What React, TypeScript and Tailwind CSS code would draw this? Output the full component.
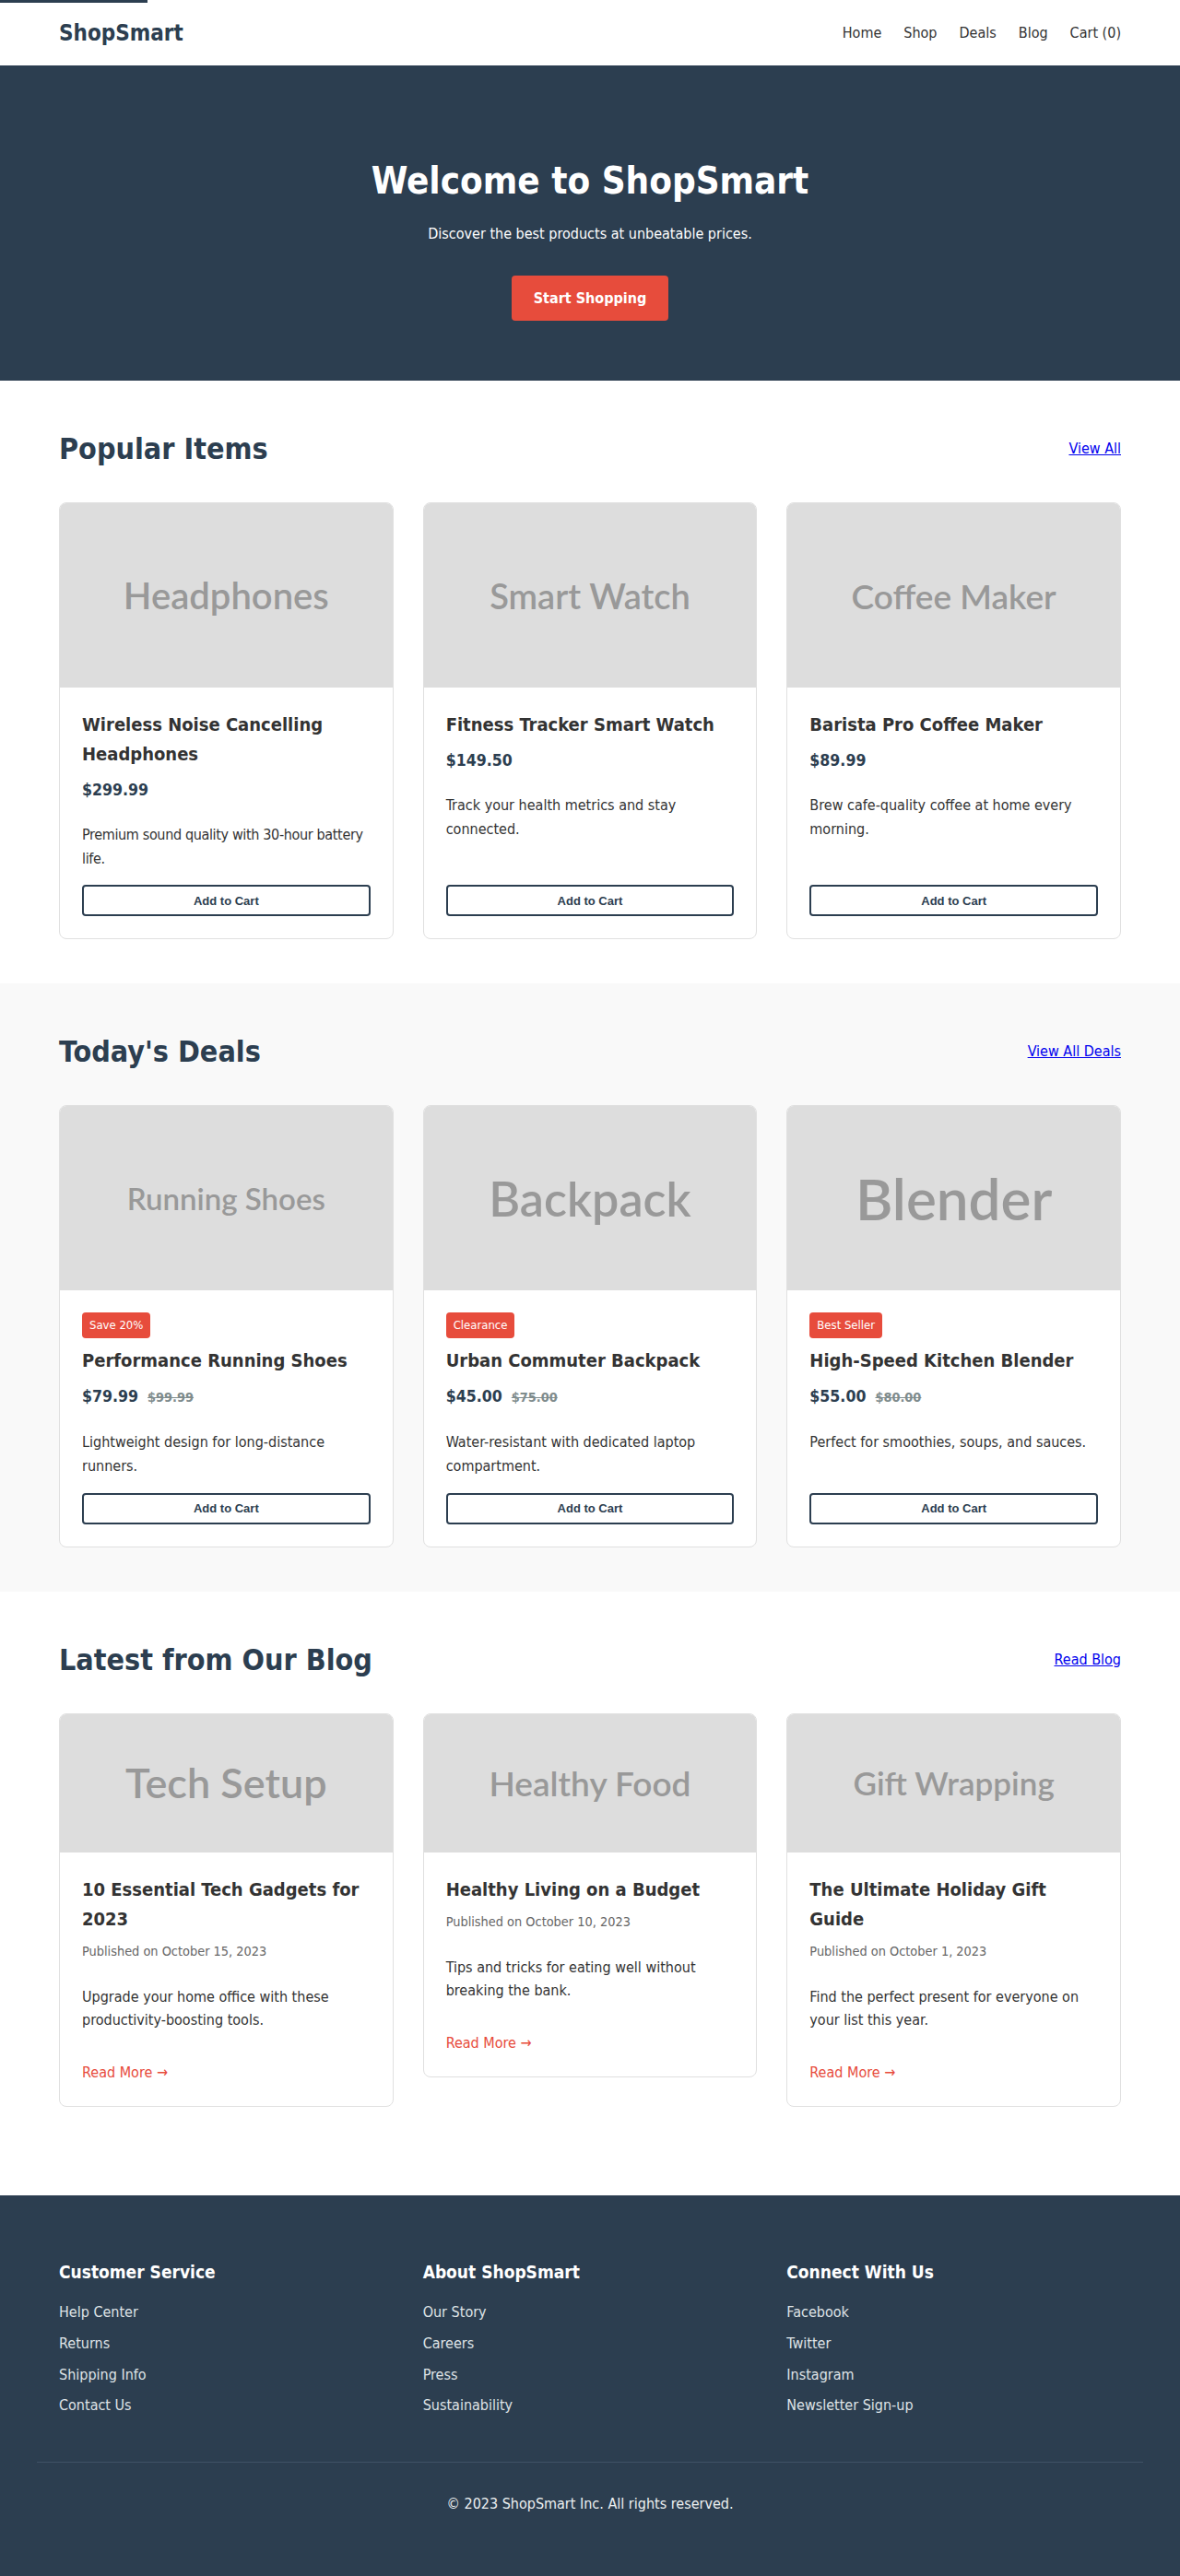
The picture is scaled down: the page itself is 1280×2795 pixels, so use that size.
import React from 'react';

const products = [
  {
    img: 'Headphones',
    imgSize: 'text-[40px]',
    title: 'Wireless Noise Cancelling Headphones',
    price: '$299.99',
    desc: 'Premium sound quality with 30-hour battery life.',
    descClass: 'tracking-[-0.35px]',
  },
  {
    img: 'Smart Watch',
    imgSize: 'text-[38px]',
    title: 'Fitness Tracker Smart Watch',
    price: '$149.50',
    desc: 'Track your health metrics and stay connected.',
  },
  {
    img: 'Coffee Maker',
    imgSize: 'text-[37px]',
    title: 'Barista Pro Coffee Maker',
    price: '$89.99',
    desc: 'Brew cafe-quality coffee at home every morning.',
  },
];

const deals = [
  {
    img: 'Running Shoes',
    imgSize: 'text-[33px]',
    badge: 'Save 20%',
    title: 'Performance Running Shoes',
    price: '$79.99',
    old: '$99.99',
    desc: 'Lightweight design for long-distance runners.',
  },
  {
    img: 'Backpack',
    imgSize: 'text-[52px]',
    badge: 'Clearance',
    title: 'Urban Commuter Backpack',
    price: '$45.00',
    old: '$75.00',
    desc: 'Water-resistant with dedicated laptop compartment.',
  },
  {
    img: 'Blender',
    imgSize: 'text-[62px]',
    badge: 'Best Seller',
    title: 'High-Speed Kitchen Blender',
    price: '$55.00',
    old: '$80.00',
    desc: 'Perfect for smoothies, soups, and sauces.',
  },
];

const posts = [
  {
    img: 'Tech Setup',
    imgSize: 'text-[45px]',
    title: '10 Essential Tech Gadgets for 2023',
    date: 'Published on October 15, 2023',
    desc: 'Upgrade your home office with these productivity-boosting tools.',
  },
  {
    img: 'Healthy Food',
    imgSize: 'text-[37px]',
    title: 'Healthy Living on a Budget',
    date: 'Published on October 10, 2023',
    desc: 'Tips and tricks for eating well without breaking the bank.',
  },
  {
    img: 'Gift Wrapping',
    imgSize: 'text-[35px]',
    title: 'The Ultimate Holiday Gift Guide',
    date: 'Published on October 1, 2023',
    desc: 'Find the perfect present for everyone on your list this year.',
  },
];

const footerCols = [
  { title: 'Customer Service', links: ['Help Center', 'Returns', 'Shipping Info', 'Contact Us'] },
  { title: 'About ShopSmart', links: ['Our Story', 'Careers', 'Press', 'Sustainability'] },
  { title: 'Connect With Us', links: ['Facebook', 'Twitter', 'Instagram', 'Newsletter Sign-up'] },
];

function Placeholder({ label, size, height }: { label: string; size: string; height: string }) {
  return (
    <div
      className={`flex ${height} items-center justify-center whitespace-nowrap bg-[#dddddd] font-['Lato',sans-serif] font-semibold leading-none text-[#999999] ${size}`}
    >
      {label}
    </div>
  );
}

function SectionHeader({ title, link }: { title: string; link: string }) {
  return (
    <div className="mb-8 flex items-center justify-between">
      <h2 className="text-[32px] font-bold leading-[52px] text-[#2c3e50]">{title}</h2>
      <a href="#" className="text-base text-[#0000ee] underline">
        {link}
      </a>
    </div>
  );
}

type Item = {
  img: string;
  imgSize: string;
  title: string;
  price: string;
  desc: string;
  descClass?: string;
  badge?: string;
  old?: string;
};

function ProductCard({ item }: { item: Item }) {
  return (
    <div className="flex flex-col overflow-hidden rounded-lg border border-[#e0e0e0] bg-white">
      <Placeholder label={item.img} size={item.imgSize} height="h-[200px]" />
      <div className="flex flex-1 flex-col p-6">
        {item.badge && (
          <span className="mb-2 self-start rounded bg-[#e74c3c] px-2 py-1 text-[13px] leading-5 text-white">
            {item.badge}
          </span>
        )}
        <h3 className="mb-2 text-[20px] font-bold leading-8 text-[#333333]">{item.title}</h3>
        <div className="mb-[21px] flex items-baseline leading-[30px]">
          <span className="text-[17.6px] font-bold text-[#2c3e50]">{item.price}</span>
          {item.old && (
            <span className="ml-2.5 text-[14.4px] font-bold text-[#7f8c8d] line-through">{item.old}</span>
          )}
        </div>
        <p className={`mb-4 text-base leading-[25.6px] text-[#333333] ${item.descClass ?? ''}`}>{item.desc}</p>
        <button className="mt-auto h-[34px] w-full rounded border-2 border-[#2c3e50] bg-white font-['Liberation_Sans',Arial,sans-serif] text-[13px] font-bold text-[#2c3e50]">
          Add to Cart
        </button>
      </div>
    </div>
  );
}

export default function App() {
  return (
    <div className="relative min-h-screen bg-white font-['DejaVu_Sans_Condensed','DejaVu_Sans',sans-serif] text-[#333333]">
      {/* loading bar */}
      <div className="absolute left-0 top-0 h-[3px] w-[160px] bg-[#2c3e50]" />

      {/* Header */}
      <header className="bg-white shadow-[0_1px_3px_rgba(0,0,0,0.12)]">
        <div className="mx-auto flex h-[71px] max-w-[1200px] items-center justify-between px-6">
          <a href="#" className="text-[24px] font-bold text-[#2c3e50]">
            ShopSmart
          </a>
          <nav className="flex gap-6 text-base text-[#333333]">
            <a href="#">Home</a>
            <a href="#">Shop</a>
            <a href="#">Deals</a>
            <a href="#">Blog</a>
            <a href="#">Cart (0)</a>
          </nav>
        </div>
      </header>

      {/* Hero */}
      <section className="bg-[#2c3e50] px-6 pb-[65px] pt-[88px] text-center text-white">
        <h1 className="mb-2 text-[40px] font-bold leading-[74px]">Welcome to ShopSmart</h1>
        <p className="mb-8 text-base leading-[25.6px]">Discover the best products at unbeatable prices.</p>
        <a
          href="#"
          className="inline-block rounded bg-[#e74c3c] px-6 py-3 text-base font-bold leading-[25.6px] text-white"
        >
          Start Shopping
        </a>
      </section>

      {/* Popular */}
      <section className="py-12">
        <div className="mx-auto max-w-[1200px] px-6">
          <SectionHeader title="Popular Items" link="View All" />
          <div className="grid grid-cols-3 gap-8">
            {products.map((p) => (
              <ProductCard key={p.title} item={p} />
            ))}
          </div>
        </div>
      </section>

      {/* Deals */}
      <section className="bg-[#f9f9f9] py-12">
        <div className="mx-auto max-w-[1200px] px-6">
          <SectionHeader title="Today's Deals" link="View All Deals" />
          <div className="grid grid-cols-3 gap-8">
            {deals.map((p) => (
              <ProductCard key={p.title} item={p} />
            ))}
          </div>
        </div>
      </section>

      {/* Blog */}
      <section className="py-12">
        <div className="mx-auto max-w-[1200px] px-6">
          <SectionHeader title="Latest from Our Blog" link="Read Blog" />
          <div className="grid grid-cols-3 items-start gap-8">
            {posts.map((b) => (
              <div key={b.title} className="overflow-hidden rounded-lg border border-[#e0e0e0] bg-white">
                <Placeholder label={b.img} size={b.imgSize} height="h-[150px]" />
                <div className="p-6">
                  <h3 className="mb-2 text-[20px] font-bold leading-8 text-[#333333]">{b.title}</h3>
                  <p className="mb-[25px] text-[14.4px] leading-[23px] text-[#666666]">{b.date}</p>
                  <p className="text-base leading-[25.6px] text-[#333333]">{b.desc}</p>
                  <a href="#" className="mt-[31px] block text-base leading-[25.6px] text-[#e74c3c]">
                    Read More →
                  </a>
                </div>
              </div>
            ))}
          </div>
        </div>
      </section>

      {/* Footer */}
      <footer className="mt-12 bg-[#2c3e50] pb-[35px] pt-[68px] text-[#ecf0f1]">
        <div className="mx-auto max-w-[1200px]">
          <div className="grid grid-cols-3 gap-8 px-6 pb-10">
            {footerCols.map((col) => (
              <div key={col.title}>
                <h4 className="mb-4 text-[19px] font-bold leading-[30px] text-white">{col.title}</h4>
                <ul>
                  {col.links.map((l) => (
                    <li key={l} className="mb-2 text-base leading-[25.6px] text-[#dfe3e6]">
                      <a href="#">{l}</a>
                    </li>
                  ))}
                </ul>
              </div>
            ))}
          </div>
          <div className="border-t border-[#405265] pb-8 pt-8 text-center text-base leading-[25.6px]">
            © 2023 ShopSmart Inc. All rights reserved.
          </div>
        </div>
      </footer>
    </div>
  );
}
